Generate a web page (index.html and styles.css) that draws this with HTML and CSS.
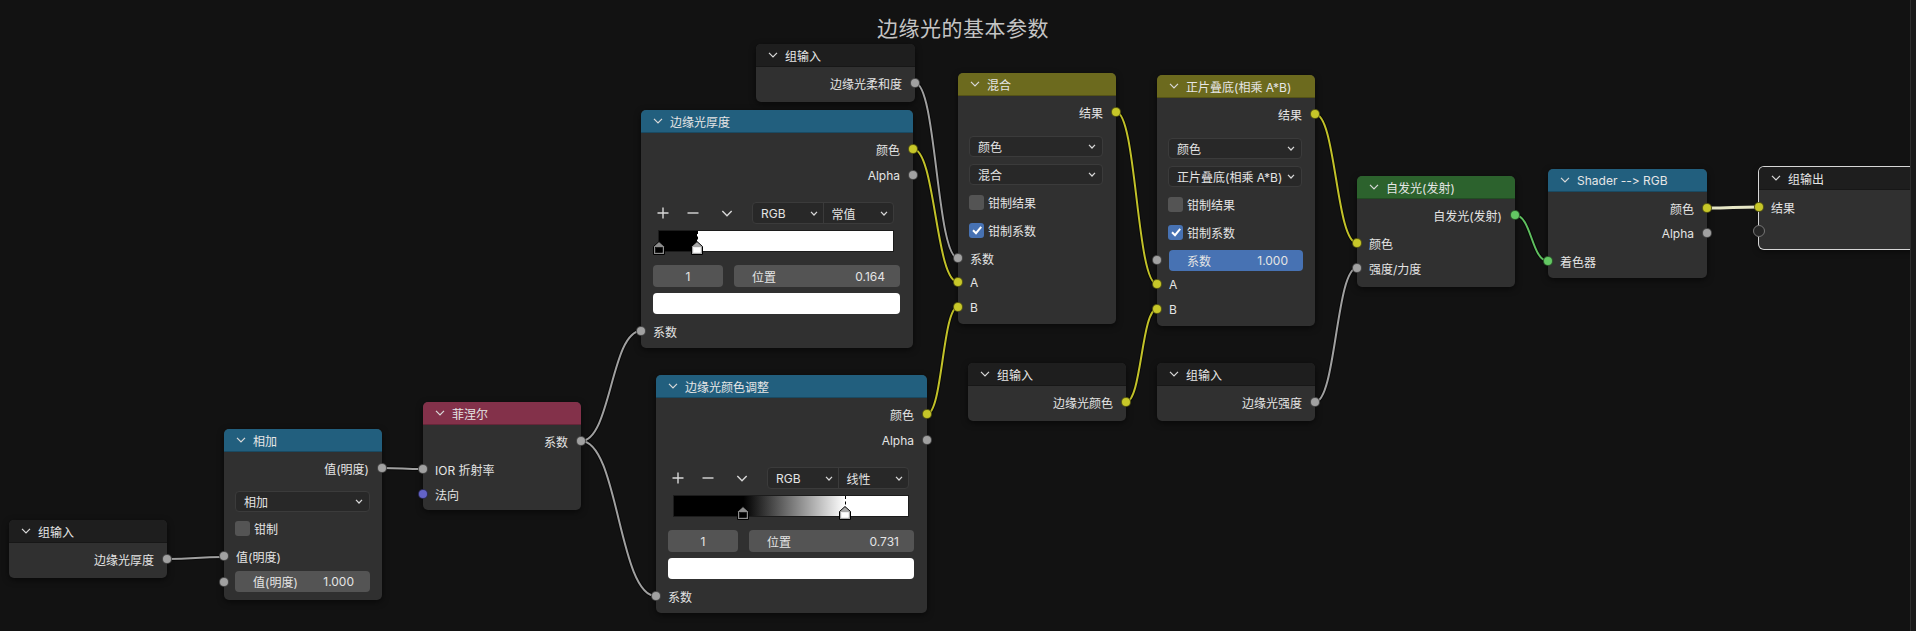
FILE: index.html
```html
<!DOCTYPE html>
<html lang="zh-CN">
<head>
<meta charset="utf-8">
<title>边缘光的基本参数</title>
<link rel="stylesheet" href="styles.css">
</head>
<body>
<svg class="defs" width="0" height="0">
  <symbol id="chev" viewBox="0 0 10 6"><path d="M1 0.8 5 5 9 0.8" fill="none" stroke="#d8d8d8" stroke-width="1.2"/></symbol>
  <symbol id="dchev" viewBox="0 0 8 5"><path d="M1 0.8 4 4 7 0.8" fill="none" stroke="#d8d8d8" stroke-width="1.2"/></symbol>
  <symbol id="plus" viewBox="0 0 12 12"><path d="M6 0.5V11.5M0.5 6H11.5" stroke="#d8d8d8" stroke-width="1.4"/></symbol>
  <symbol id="minus" viewBox="0 0 12 12"><path d="M0.5 6H11.5" stroke="#d8d8d8" stroke-width="1.4"/></symbol>
  <symbol id="check" viewBox="0 0 14 14"><path d="M3 7.2 6 10.2 11.2 3.8" fill="none" stroke="#fff" stroke-width="2"/></symbol>
  <symbol id="mk-dark" viewBox="0 0 12 14"><path d="M0.5 13.5V5.5L6 0.5 11.5 5.5V13.5Z" fill="#8c8c8c" stroke="#000"/><rect x="2.5" y="6.5" width="7" height="5" fill="#000" stroke="#000" stroke-width="0.6"/></symbol>
  <symbol id="mk-light" viewBox="0 0 12 14"><path d="M0.5 13.5V5.5L6 0.5 11.5 5.5V13.5Z" fill="#a8a8a8" stroke="#000"/><rect x="2.5" y="6.5" width="7" height="5" fill="#fff" stroke="#fff" stroke-width="0.6"/></symbol>
</svg>
<div class="canvas">
  <div class="frame-title">边缘光的基本参数</div>

  <svg class="wires" width="1916" height="631" viewBox="0 0 1916 631">
    <g class="shade">
      <path d="M167 559C195.5 559 195.5 557 224 557"/>
      <path d="M382 468C402.5 468 402.5 469 423 469"/>
      <path d="M581 441C611 441 611 331 641 331"/>
      <path d="M581 441C618.5 441 618.5 596 656 596"/>
      <path d="M915 83C936.5 83 936.5 258 958 258"/>
      <path d="M913 149C935.5 149 935.5 282 958 282"/>
      <path d="M927 414C942.5 414 942.5 307 958 307"/>
      <path d="M1116 112C1136.5 112 1136.5 284 1157 284"/>
      <path d="M1126 402C1141.5 402 1141.5 309 1157 309"/>
      <path d="M1315 114C1336 114 1336 243 1357 243"/>
      <path d="M1315 402C1336 402 1336 268 1357 268"/>
      <path d="M1515 215C1531.5 215 1531.5 261 1548 261"/>
    </g>
    <g class="w-gray">
      <path d="M167 559C195.5 559 195.5 557 224 557"/>
      <path d="M382 468C402.5 468 402.5 469 423 469"/>
      <path d="M581 441C611 441 611 331 641 331"/>
      <path d="M581 441C618.5 441 618.5 596 656 596"/>
      <path d="M915 83C936.5 83 936.5 258 958 258"/>
      <path d="M1315 402C1336 402 1336 268 1357 268"/>
    </g>
    <g class="w-yellow">
      <path d="M913 149C935.5 149 935.5 282 958 282"/>
      <path d="M927 414C942.5 414 942.5 307 958 307"/>
      <path d="M1116 112C1136.5 112 1136.5 284 1157 284"/>
      <path d="M1126 402C1141.5 402 1141.5 309 1157 309"/>
      <path d="M1315 114C1336 114 1336 243 1357 243"/>
    </g>
    <g class="w-green">
      <path d="M1515 215C1531.5 215 1531.5 261 1548 261"/>
    </g>
    <path class="w-active" d="M1707 208C1733 208 1733 207 1759 207"/>
  </svg>

  <!-- group input: rim thickness -->
  <div class="node n-gi1">
    <div class="hdr dark"><svg class="chev"><use href="#chev"/></svg><span>组输入</span></div>
    <div class="body gi-body">
      <div class="row out">边缘光厚度<span class="sock gray"></span></div>
    </div>
  </div>

  <!-- add -->
  <div class="node n-add">
    <div class="hdr blue"><svg class="chev"><use href="#chev"/></svg><span>相加</span></div>
    <div class="body add-body">
      <div class="row out">值(明度)<span class="sock gray"></span></div>
      <div class="dd add-dd"><span>相加</span><svg class="dchev"><use href="#dchev"/></svg></div>
      <div class="row chk add-chk"><span class="cb"></span>钳制</div>
      <div class="row in add-in">值(明度)<span class="sock gray"></span></div>
      <div class="field-row add-field"><span class="sock gray"></span><div class="num val"><span>值(明度)</span><span>1.000</span></div></div>
    </div>
  </div>

  <!-- fresnel -->
  <div class="node n-fresnel">
    <div class="hdr red"><svg class="chev"><use href="#chev"/></svg><span>菲涅尔</span></div>
    <div class="body fr-body">
      <div class="row out">系数<span class="sock gray"></span></div>
      <div class="row in fr-ior">IOR 折射率<span class="sock gray"></span></div>
      <div class="row in fr-nor">法向<span class="sock violet"></span></div>
    </div>
  </div>

  <!-- group input: softness -->
  <div class="node n-gi-top">
    <div class="hdr dark"><svg class="chev"><use href="#chev"/></svg><span>组输入</span></div>
    <div class="body gi-body">
      <div class="row out">边缘光柔和度<span class="sock gray"></span></div>
    </div>
  </div>

  <!-- color ramp 1 -->
  <div class="node n-ramp1">
    <div class="hdr blue"><svg class="chev"><use href="#chev"/></svg><span>边缘光厚度</span></div>
    <div class="body ramp-body">
      <div class="row out">颜色<span class="sock yellow"></span></div>
      <div class="row out r2">Alpha<span class="sock gray"></span></div>
      <div class="ramp-tools">
        <svg class="tool t-add"><use href="#plus"/></svg>
        <svg class="tool t-rem"><use href="#minus"/></svg>
        <svg class="tool t-menu"><use href="#chev"/></svg>
        <div class="seg">
          <div class="seg-item"><span>RGB</span><svg class="dchev"><use href="#dchev"/></svg></div>
          <div class="seg-item"><span>常值</span><svg class="dchev"><use href="#dchev"/></svg></div>
        </div>
      </div>
      <div class="ramp-bar constant">
        <svg class="marker" style="left:0%"><use href="#mk-dark"/></svg>
        <span class="active-line" style="left:16.4%"></span>
        <svg class="marker" style="left:16.4%"><use href="#mk-light"/></svg>
      </div>
      <div class="ramp-fields">
        <div class="num idx">1</div>
        <div class="num pos"><span>位置</span><span>0.164</span></div>
      </div>
      <div class="swatch"></div>
      <div class="row in r-in">系数<span class="sock gray"></span></div>
    </div>
  </div>

  <!-- color ramp 2 -->
  <div class="node n-ramp2">
    <div class="hdr blue"><svg class="chev"><use href="#chev"/></svg><span>边缘光颜色调整</span></div>
    <div class="body ramp-body">
      <div class="row out">颜色<span class="sock yellow"></span></div>
      <div class="row out r2">Alpha<span class="sock gray"></span></div>
      <div class="ramp-tools">
        <svg class="tool t-add"><use href="#plus"/></svg>
        <svg class="tool t-rem"><use href="#minus"/></svg>
        <svg class="tool t-menu"><use href="#chev"/></svg>
        <div class="seg">
          <div class="seg-item"><span>RGB</span><svg class="dchev"><use href="#dchev"/></svg></div>
          <div class="seg-item"><span>线性</span><svg class="dchev"><use href="#dchev"/></svg></div>
        </div>
      </div>
      <div class="ramp-bar linear">
        <svg class="marker" style="left:29.7%"><use href="#mk-dark"/></svg>
        <span class="active-line" style="left:73.1%"></span>
        <svg class="marker" style="left:73.1%"><use href="#mk-light"/></svg>
      </div>
      <div class="ramp-fields">
        <div class="num idx">1</div>
        <div class="num pos"><span>位置</span><span>0.731</span></div>
      </div>
      <div class="swatch"></div>
      <div class="row in r-in">系数<span class="sock gray"></span></div>
    </div>
  </div>

  <!-- mix -->
  <div class="node n-mix">
    <div class="hdr olive"><svg class="chev"><use href="#chev"/></svg><span>混合</span></div>
    <div class="body mix-body">
      <div class="row out">结果<span class="sock yellow"></span></div>
      <div class="dd dd1"><span>颜色</span><svg class="dchev"><use href="#dchev"/></svg></div>
      <div class="dd dd2"><span>混合</span><svg class="dchev"><use href="#dchev"/></svg></div>
      <div class="row chk c1"><span class="cb"></span>钳制结果</div>
      <div class="row chk c2"><span class="cb on"><svg class="tick"><use href="#check"/></svg></span>钳制系数</div>
      <div class="row in c3">系数<span class="sock gray"></span></div>
      <div class="row in">A<span class="sock yellow"></span></div>
      <div class="row in b1">B<span class="sock yellow"></span></div>
    </div>
  </div>

  <!-- multiply -->
  <div class="node n-mul">
    <div class="hdr olive"><svg class="chev"><use href="#chev"/></svg><span>正片叠底(相乘 A*B)</span></div>
    <div class="body mix-body">
      <div class="row out">结果<span class="sock yellow"></span></div>
      <div class="dd dd1"><span>颜色</span><svg class="dchev"><use href="#dchev"/></svg></div>
      <div class="dd dd2"><span>正片叠底(相乘 A*B)</span><svg class="dchev"><use href="#dchev"/></svg></div>
      <div class="row chk c1"><span class="cb"></span>钳制结果</div>
      <div class="row chk c2"><span class="cb on"><svg class="tick"><use href="#check"/></svg></span>钳制系数</div>
      <div class="row in c3 slider-row"><span class="sock gray"></span><div class="slider"><span>系数</span><span>1.000</span></div></div>
      <div class="row in">A<span class="sock yellow"></span></div>
      <div class="row in b1">B<span class="sock yellow"></span></div>
    </div>
  </div>

  <!-- group input: rim colour -->
  <div class="node n-gi-col">
    <div class="hdr dark"><svg class="chev"><use href="#chev"/></svg><span>组输入</span></div>
    <div class="body gi-body">
      <div class="row out">边缘光颜色<span class="sock yellow"></span></div>
    </div>
  </div>

  <!-- group input: rim strength -->
  <div class="node n-gi-str">
    <div class="hdr dark"><svg class="chev"><use href="#chev"/></svg><span>组输入</span></div>
    <div class="body gi-body">
      <div class="row out">边缘光强度<span class="sock gray"></span></div>
    </div>
  </div>

  <!-- emission -->
  <div class="node n-emit">
    <div class="hdr green"><svg class="chev"><use href="#chev"/></svg><span>自发光(发射)</span></div>
    <div class="body em-body">
      <div class="row out">自发光(发射)<span class="sock green-s"></span></div>
      <div class="row in em-col">颜色<span class="sock yellow"></span></div>
      <div class="row in em-str">强度/力度<span class="sock gray"></span></div>
    </div>
  </div>

  <!-- shader to rgb -->
  <div class="node n-s2rgb">
    <div class="hdr blue"><svg class="chev"><use href="#chev"/></svg><span class="plain">Shader --&gt; RGB</span></div>
    <div class="body s2-body">
      <div class="row out">颜色<span class="sock yellow"></span></div>
      <div class="row out s2-a">Alpha<span class="sock gray"></span></div>
      <div class="row in s2-in">着色器<span class="sock green-s"></span></div>
    </div>
  </div>

  <!-- group output -->
  <div class="node n-gout">
    <div class="hdr dark"><svg class="chev"><use href="#chev"/></svg><span>组输出</span></div>
    <div class="body go-body">
      <div class="row in">结果<span class="sock yellow"></span></div>
      <div class="row in"><span class="sock hollow"></span></div>
    </div>
  </div>

  <div class="edge-line"></div>
</div>
</body>
</html>
```

FILE: styles.css
```css
html, body {
  margin: 0;
  padding: 0;
  background: #121212;
}
body {
  width: 1916px;
  height: 631px;
  overflow: hidden;
  font-family: "Inter", "Noto Sans CJK SC", sans-serif;
  font-size: 12px;
  color: #e4e4e4;
  font-feature-settings: "calt" 0, "liga" 0;
  font-variant-ligatures: none;
}
.defs { position: absolute; }

.canvas {
  position: relative;
  width: 1916px;
  height: 631px;
  overflow: hidden;
  background: #121212;
}

.frame-title {
  position: absolute;
  left: 0;
  right: 0;
  top: 14px;
  padding-left: 10px;
  text-align: center;
  font-size: 21px;
  line-height: 30px;
  color: #c4c4c4;
  letter-spacing: 0.5px;
}

.wires {
  position: absolute;
  left: 0;
  top: 0;
}
.wires path { fill: none; }
.shade path { stroke: rgba(0,0,0,0.55); stroke-width: 4; }
.w-gray path { stroke: #a0a0a0; stroke-width: 2; }
.w-yellow path { stroke: #c2c229; stroke-width: 2; }
.w-green path { stroke: #5fbf5f; stroke-width: 2; }
.w-active { stroke: #e6e6c6; stroke-width: 3; }

/* ---------- nodes ---------- */
.node {
  position: absolute;
  background: #303030;
  border-radius: 5px;
  box-shadow: 0 2px 6px rgba(0,0,0,0.55);
}
.hdr {
  height: 23px;
  box-sizing: border-box;
  border-radius: 5px 5px 0 0;
  display: flex;
  align-items: center;
  gap: 7px;
  padding-left: 12px;
  border-bottom: 1px solid rgba(0,0,0,0.22);
  color: #e6e6e6;
  white-space: nowrap;
  overflow: hidden;
}
.hdr .plain { font-feature-settings: "calt" 0, "liga" 0, "dlig" 0; }
.hdr.dark { background: #1e1e1e; }
.hdr.blue { background: #225f7e; }
.hdr.olive { background: #6c6a1e; }
.hdr.red { background: #83314a; }
.hdr.green { background: #2c622d; }
.chev { width: 10px; height: 6px; flex: none; }
.dchev { width: 8px; height: 5px; flex: none; }

.body { position: relative; }

.row {
  position: relative;
  height: 24px;
  display: flex;
  align-items: center;
  white-space: nowrap;
}
.row.out { justify-content: flex-end; padding-right: 13px; }
.row.in { padding-left: 12px; }
.row.chk { padding-left: 11px; gap: 4px; }

.sock {
  position: absolute;
  top: 7px;
  width: 10px;
  height: 10px;
  box-sizing: border-box;
  border-radius: 50%;
  border: 1px solid rgba(0,0,0,0.55);
}
.row.out .sock { right: -5px; }
.row.in .sock, .field-row .sock { left: -5px; }
.sock.gray { background: #a1a1a1; }
.sock.yellow { background: #c7c729; }
.sock.green-s { background: #63c763; }
.sock.violet { background: #6363c7; }
.row.in .sock.hollow { background: #262626; border: 1.5px solid #767676; width: 12px; height: 12px; left: -6px; top: 6px; }

/* widgets */
.dd {
  height: 21px;
  box-sizing: border-box;
  background: #282828;
  border: 1px solid #3b3b3b;
  border-radius: 4px;
  display: flex;
  align-items: center;
  justify-content: space-between;
  padding: 0 6px 0 8px;
  white-space: nowrap;
}
.cb {
  width: 15px;
  height: 15px;
  border-radius: 3px;
  background: #545454;
  display: flex;
  align-items: center;
  justify-content: center;
  flex: none;
}
.cb.on { background: #4772b3; }
.tick { width: 14px; height: 14px; }

.num {
  height: 100%;
  box-sizing: border-box;
  background: #545454;
  border-radius: 4px;
  display: flex;
  align-items: center;
  white-space: nowrap;
}
.slider {
  height: 21px;
  flex: 1;
  margin-right: 12px;
  box-sizing: border-box;
  background: #4772b3;
  border-radius: 4px;
  display: flex;
  align-items: center;
  justify-content: space-between;
  padding: 0 15px 0 18px;
}
.row.slider-row { padding-left: 12px; }

/* group input / output */
.gi-body { padding: 4px 0 7px; }
.go-body { padding: 5px 0 6px; }
.n-gout { box-shadow: 0 0 0 1px #d6d6d6, 0 2px 6px rgba(0,0,0,0.55); }

/* add */
.add-body { padding: 4px 0 8px; }
.add-dd { margin: 11px 12px 0 11px; }
.add-chk { margin-top: 4px; }
.add-in { margin-top: 4px; }
.field-row {
  position: relative;
  height: 21px;
  margin: 3px 12px 0 11px;
}
.field-row .sock { top: 5.5px; left: -16px; }
.num.val { justify-content: space-between; padding: 0 16px 0 18px; }

/* fresnel */
.fr-body { padding: 4px 0 4px; }
.fr-ior { margin-top: 4px; }
.fr-nor { margin-top: 1px; }

/* color ramp */
.ramp-body { padding: 4px 0 5px; }
.ramp-body .r2 { margin-top: 2px; }
.ramp-tools {
  margin-top: 15px;
  height: 22px;
  display: flex;
  align-items: center;
  padding-left: 16px;
}
.tool { width: 12px; height: 12px; flex: none; }
.tool.t-menu { width: 12px; height: 7px; }
.t-rem { margin-left: 18px; }
.t-menu { margin-left: 22px; }
.seg {
  margin-left: 19px;
  width: 142px;
  height: 22px;
  box-sizing: border-box;
  display: flex;
  background: #282828;
  border: 1px solid #3b3b3b;
  border-radius: 4px;
}
.seg-item {
  flex: 1;
  display: flex;
  align-items: center;
  justify-content: space-between;
  padding: 0 5px 0 8px;
}
.seg-item + .seg-item { border-left: 1px solid #3b3b3b; }
.ramp-bar {
  position: relative;
  margin: 6px 0 0 17px;
  width: 236px;
  height: 22px;
  box-sizing: border-box;
  border: 1px solid #1c1c1c;
}
.ramp-bar.constant { background: linear-gradient(to right, #000 16.4%, #fff 16.4%); }
.ramp-bar.linear { background: linear-gradient(to right, #000 29.7%, #fff 73.1%); }
.marker {
  position: absolute;
  bottom: -4px;
  width: 12px;
  height: 14px;
  margin-left: -6px;
}
.active-line {
  position: absolute;
  top: 0;
  bottom: 6px;
  border-left: 1px dashed #000;
}
.ramp-fields {
  margin-top: 13px;
  padding: 0 13px 0 12px;
  height: 22px;
  display: flex;
  gap: 11px;
}
.num.idx { width: 70px; justify-content: center; }
.num.pos { flex: 1; justify-content: space-between; padding: 0 15px 0 18px; }
.swatch {
  margin: 6px 13px 0 12px;
  height: 21px;
  background: #fff;
  border-radius: 4px;
}
.ramp-body .r-in { margin-top: 5px; }

/* mix */
.mix-body { padding: 4px 0 5px; }
.mix-body .dd { margin-left: 11px; margin-right: 13px; }
.mix-body .dd1 { margin-top: 12px; }
.mix-body .dd2 { margin-top: 7px; }
.mix-body .c1 { margin-top: 5px; }
.mix-body .c2 { margin-top: 4px; }
.mix-body .c3 { margin-top: 4px; }
.mix-body .b1 { margin-top: 1px; }

/* emission */
.em-body { padding: 4px 0 7px; }
.em-col { margin-top: 4px; }
.em-str { margin-top: 1px; }

/* shader to rgb */
.s2-body { padding: 4px 0 5px; }
.s2-a { margin-top: 1px; }
.s2-in { margin-top: 4px; }

/* node placement on the canvas */
.n-gi1 { left: 9px; top: 520px; width: 158px; }
.n-add { left: 224px; top: 429px; width: 158px; }
.n-fresnel { left: 423px; top: 402px; width: 158px; }
.n-gi-top { left: 756px; top: 44px; width: 159px; }
.n-ramp1 { left: 641px; top: 110px; width: 272px; }
.n-ramp2 { left: 656px; top: 375px; width: 271px; }
.n-mix { left: 958px; top: 73px; width: 158px; }
.n-mul { left: 1157px; top: 75px; width: 158px; }
.n-gi-col { left: 968px; top: 363px; width: 158px; }
.n-gi-str { left: 1157px; top: 363px; width: 158px; }
.n-emit { left: 1357px; top: 176px; width: 158px; }
.n-s2rgb { left: 1548px; top: 169px; width: 159px; }
.n-gout { left: 1759px; top: 167px; width: 180px; }

.edge-line {
  position: absolute;
  top: 0;
  bottom: 0;
  left: 1910px;
  width: 6px;
  background: #1a1a1a;
  border-left: 1px solid #2e2e2e;
}
```
